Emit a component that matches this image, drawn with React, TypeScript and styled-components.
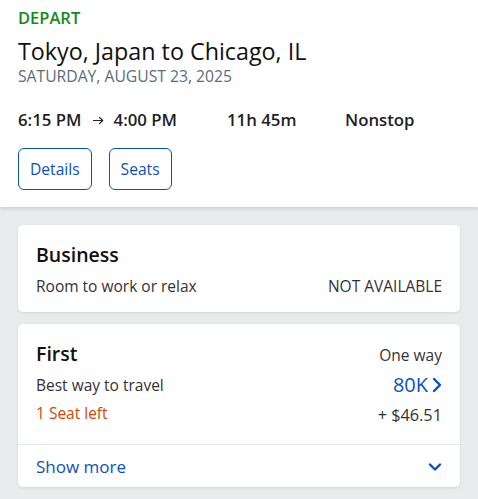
import styled, { createGlobalStyle } from 'styled-components';

const GlobalStyle = createGlobalStyle`
  html, body {
    margin: 0;
    padding: 0;
    background: #e9ecec;
    font-family: 'Open Sans', 'Noto Sans', Arial, sans-serif;
    -webkit-font-smoothing: antialiased;
  }
  * { box-sizing: border-box; }
`;

const BLUE = '#0c4fbf';

const Page = styled.div`
  width: 478px;
  min-height: 499px;
  background: #e9ecec;
`;

const Header = styled.header`
  background: #fff;
  padding: 6px 18px 17px;
  box-shadow: 0 2px 4px rgba(0, 0, 0, 0.12);
`;

const Label = styled.div`
  color: #138a1b;
  font-size: 16.5px;
  font-weight: 600;
  line-height: 24px;
`;

const Route = styled.h1`
  margin: 6px 0 0;
  font-size: 23.3px;
  font-weight: 400;
  line-height: 30px;
  color: #111;
`;

const DateText = styled.div`
  margin-top: 1px;
  font-size: 15.7px;
  line-height: 18px;
  color: #5a6d7d;
`;

const TimeRow = styled.div`
  display: flex;
  align-items: center;
  margin-top: 23px;
  font-size: 16.8px;
  font-weight: 600;
  line-height: 24px;
  color: #1f1f1f;
`;

const Times = styled.span`
  width: 209px;
  display: flex;
  align-items: center;
`;

const ArrowIcon = styled.svg`
  margin: 1px 10px 0 11px;
  flex-shrink: 0;
`;

const Duration = styled.span`
  width: 118px;
`;

const ButtonRow = styled.div`
  display: flex;
  gap: 17px;
  margin-top: 16px;
`;

const OutlineButton = styled.button`
  height: 42px;
  padding: 0 11px;
  border: 1.5px solid ${BLUE};
  border-radius: 6px;
  background: #fff;
  color: ${BLUE};
  font-family: inherit;
  font-size: 15.6px;
  cursor: pointer;
`;

const List = styled.div`
  display: flex;
  flex-direction: column;
  gap: 12px;
  padding: 18px 18px 12px;
`;

const Card = styled.div`
  background: #fff;
  border-radius: 5px;
  box-shadow: 0 1px 3px rgba(0, 0, 0, 0.1);
  overflow: hidden;
`;

const CardBody = styled.div<{ $stack?: boolean }>`
  display: flex;
  flex-direction: ${({ $stack }) => ($stack ? 'column' : 'row')};
  justify-content: space-between;
  padding: 16px 18px ${({ $stack }) => ($stack ? 15 : 18)}px;
`;

const Column = styled.div<{ $align?: 'right' }>`
  display: flex;
  flex-direction: column;
  align-items: ${({ $align }) => ($align === 'right' ? 'flex-end' : 'flex-start')};
`;

const CabinName = styled.div`
  font-size: 19.5px;
  font-weight: 600;
  line-height: 28px;
  color: #111;
`;

const Muted = styled.div<{ $gap?: number }>`
  font-size: 15.5px;
  line-height: 22px;
  color: #333;
  margin-top: ${({ $gap }) => $gap ?? 0}px;
`;

const SeatsLeft = styled.div`
  font-size: 15.5px;
  line-height: 22px;
  color: #d8430b;
  margin-top: 6px;
`;

const Price = styled.div`
  display: flex;
  align-items: center;
  gap: 4px;
  font-size: 20px;
  line-height: 26px;
  color: ${BLUE};
  margin-top: 6px;
`;

const Fee = styled.div`
  font-size: 16.3px;
  line-height: 22px;
  color: #333;
  margin-top: 6px;
`;

const BusinessRow = styled.div`
  display: flex;
  justify-content: space-between;
  align-items: baseline;
  margin-top: 6px;
`;

const Footer = styled.div`
  display: flex;
  justify-content: space-between;
  align-items: center;
  border-top: 1px solid #e3e6e8;
  padding: 10px 18px 8px;
  color: ${BLUE};
  font-size: 17px;
  line-height: 24px;
`;

const Arrow = () => (
  <ArrowIcon width="11" height="9" viewBox="0 0 11 9" fill="none">
    <path d="M0.5 4.5h9M6.5 1.3l3.2 3.2-3.2 3.2" stroke="#222" strokeWidth="1.2" strokeLinecap="round" strokeLinejoin="round" />
  </ArrowIcon>
);

const Chevron = ({ dir }: { dir: 'right' | 'down' }) =>
  dir === 'right' ? (
    <svg width="10" height="16" viewBox="0 0 10 16" fill="none">
      <path d="M2 2l6 6-6 6" stroke={BLUE} strokeWidth="2.4" strokeLinecap="round" strokeLinejoin="round" />
    </svg>
  ) : (
    <svg width="14" height="10" viewBox="0 0 14 10" fill="none">
      <path d="M2 2.5l5 5 5-5" stroke={BLUE} strokeWidth="2.4" strokeLinecap="round" strokeLinejoin="round" />
    </svg>
  );

export default function App() {
  return (
    <Page>
      <GlobalStyle />
      <Header>
        <Label>DEPART</Label>
        <Route>Tokyo, Japan to Chicago, IL</Route>
        <DateText>SATURDAY, AUGUST 23, 2025</DateText>
        <TimeRow>
          <Times>
            6:15 PM
            <Arrow />
            4:00 PM
          </Times>
          <Duration>11h 45m</Duration>
          <span>Nonstop</span>
        </TimeRow>
        <ButtonRow>
          <OutlineButton>Details</OutlineButton>
          <OutlineButton>Seats</OutlineButton>
        </ButtonRow>
      </Header>
      <List>
        <Card>
          <CardBody $stack>
            <CabinName>Business</CabinName>
            <BusinessRow>
              <Muted>Room to work or relax</Muted>
              <Muted>NOT AVAILABLE</Muted>
            </BusinessRow>
          </CardBody>
        </Card>
        <Card>
          <CardBody>
            <Column>
              <CabinName>First</CabinName>
              <Muted $gap={6}>Best way to travel</Muted>
              <SeatsLeft>1 Seat left</SeatsLeft>
            </Column>
            <Column $align="right">
              <Muted $gap={4}>One way</Muted>
              <Price>
                80K
                <Chevron dir="right" />
              </Price>
              <Fee>+ $46.51</Fee>
            </Column>
          </CardBody>
          <Footer>
            <span>Show more</span>
            <Chevron dir="down" />
          </Footer>
        </Card>
      </List>
    </Page>
  );
}
